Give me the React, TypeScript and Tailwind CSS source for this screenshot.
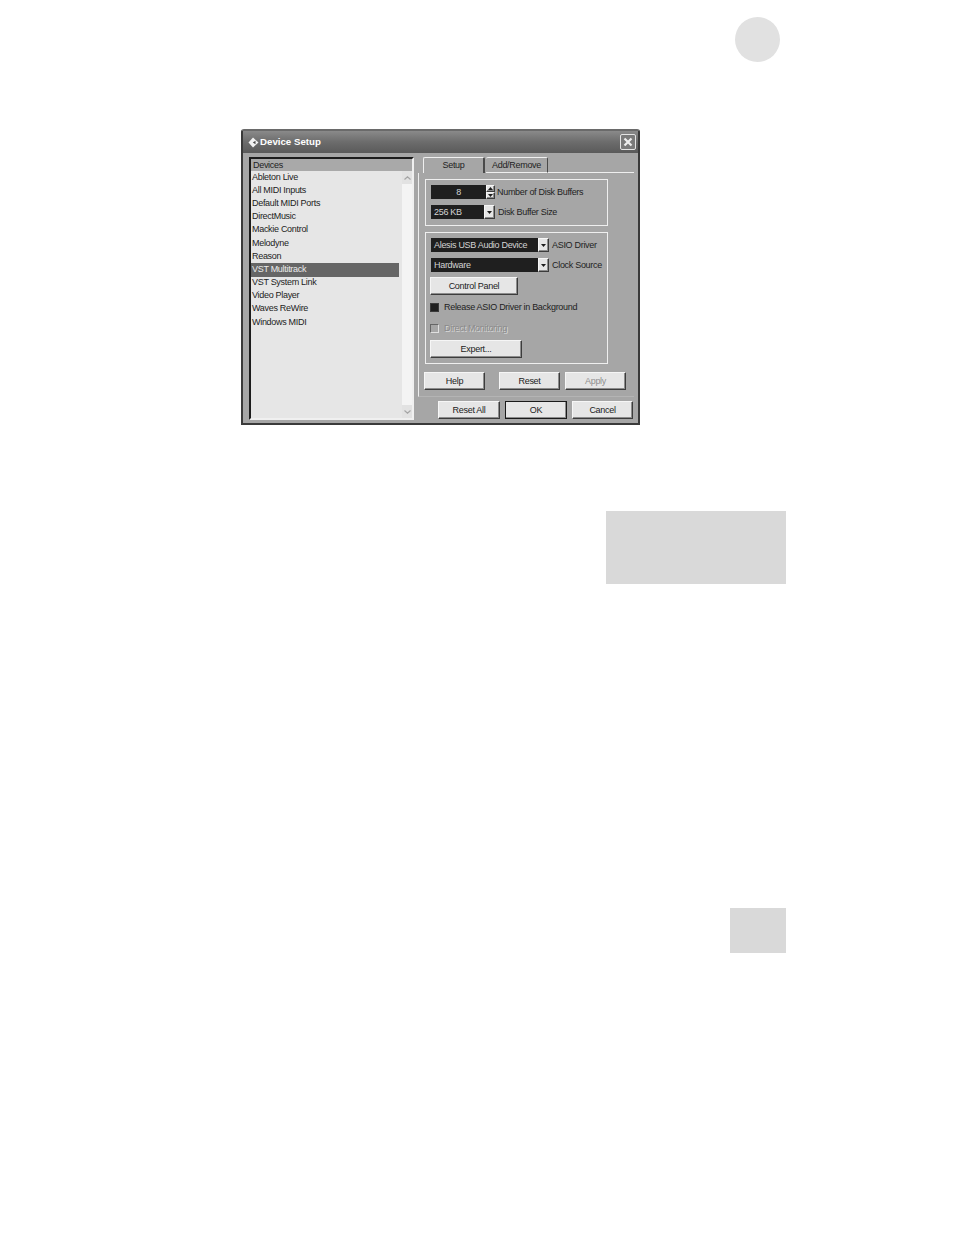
const devices = [
  'Ableton Live',
  'All MIDI Inputs',
  'Default MIDI Ports',
  'DirectMusic',
  'Mackie Control',
  'Melodyne',
  'Reason',
  'VST Multitrack',
  'VST System Link',
  'Video Player',
  'Waves ReWire',
  'Windows MIDI',
]

const raised =
  'flex items-center justify-center bg-[#e6e6e6] border border-[#f6f6f6] border-r-[#3c3c3c] border-b-[#3c3c3c] shadow-[inset_-1px_-1px_0_#8c8c8c] text-[#1c1c1c]'

function Btn({ label, w, disabled, strong }: { label: string; w: string; disabled?: boolean; strong?: boolean }) {
  return (
    <div
      className={`${raised} ${w} h-[18px] ${disabled ? 'text-[#8f8f8f]' : ''} ${strong ? 'outline outline-1 -outline-offset-1 outline-[#1a1a1a]' : ''}`}
    >
      {label}
    </div>
  )
}

function Arrow({ up }: { up?: boolean }) {
  return (
    <svg width="5" height="3" viewBox="0 0 5 3" className={up ? 'rotate-180' : ''}>
      <path d="M0 0h5L2.5 3z" fill="#1c1c1c" />
    </svg>
  )
}

function Combo({ label, w, side }: { label: string; w: string; side: string }) {
  return (
    <div className="flex items-center">
      <div className={`${w} flex h-[14px] items-center bg-[#1f1f1f] pl-[3px] text-[#d4d4d4]`}>
        <span className="flex-1 whitespace-nowrap">{label}</span>
        <span className={`${raised} h-[14px] w-[11px] shrink-0`}>
          <Arrow />
        </span>
      </div>
      <span className="ml-[3px] whitespace-nowrap text-[#222]">{side}</span>
    </div>
  )
}

function DeviceList() {
  return (
    <div className="flex h-[263px] w-[165px] flex-col border-2 border-[#1c1c1c] border-r-[#f0f0f0] border-b-[#f0f0f0] bg-[#e6e6e6]">
      <div className="flex h-[12px] items-center bg-[#a9a9a9] pl-[2px] text-[#222]">Devices</div>
      <div className="flex min-h-0 flex-1">
        <div className="mr-[3px] flex flex-1 flex-col">
          {devices.map((d) => (
            <div
              key={d}
              className={`flex h-[13.2px] items-center pb-[1px] pl-[1px] ${d === 'VST Multitrack' ? 'bg-[#666] text-[#ececec]' : 'text-[#1c1c1c]'}`}
            >
              {d}
            </div>
          ))}
        </div>
        <div className="flex w-[10px] flex-col justify-between bg-[#f4f4f4]">
          <div className="flex h-[13px] items-center justify-center bg-[#e2e2e2]">
            <svg width="7" height="4" viewBox="0 0 7 4">
              <path d="M0.5 3.5L3.5 .8 6.5 3.5" fill="none" stroke="#a5a5a5" strokeWidth="1.2" />
            </svg>
          </div>
          <div className="flex h-[13px] items-center justify-center bg-[#e2e2e2]">
            <svg width="7" height="4" viewBox="0 0 7 4">
              <path d="M0.5 .5L3.5 3.2 6.5 .5" fill="none" stroke="#a5a5a5" strokeWidth="1.2" />
            </svg>
          </div>
        </div>
      </div>
    </div>
  )
}

function SetupPane() {
  return (
    <div className="w-[216px]">
      <div className="flex h-[16px] pl-[5px]">
        <div className="flex w-[62px] items-center justify-center rounded-t-[2px] border-t border-l border-[#efefef] border-r-2 border-r-[#4a4a4a] pb-[1px] text-[#222]">
          Setup
        </div>
        <div className="ml-[1px] flex w-[62px] items-center justify-center rounded-t-[2px] border-t border-b border-[#efefef] border-r border-r-[#4a4a4a] text-[#222]">
          Add/Remove
        </div>
        <div className="flex-1 border-b border-[#efefef]" />
      </div>
      <div className="h-[224px] border-l border-b border-l-[#efefef] border-b-[#b4b4b4] pt-[6px] pl-[6px]">
        <div className="flex h-[47px] w-[183px] flex-col gap-[6px] border border-[#efefef] pt-[5px] pl-[5px]">
          <div className="flex items-center">
            <div className="flex h-[14px] w-[55px] items-center justify-center bg-[#1f1f1f] text-[#d4d4d4]">8</div>
            <div className="flex h-[14px] w-[9px] flex-col">
              <span className={`${raised} h-[7px]`}>
                <Arrow up />
              </span>
              <span className={`${raised} h-[7px]`}>
                <Arrow />
              </span>
            </div>
            <span className="ml-[2px] text-[#222]">Number of Disk Buffers</span>
          </div>
          <Combo label="256 KB" w="w-[64px]" side="Disk Buffer Size" />
        </div>
        <div className="mt-[6px] flex h-[132px] w-[183px] flex-col border border-[#efefef] pt-[5px] pl-[4px]">
          <div className="ml-[1px]">
            <Combo label="Alesis USB Audio Device" w="w-[118px]" side="ASIO Driver" />
          </div>
          <div className="mt-[6px] ml-[1px]">
            <Combo label="Hardware" w="w-[118px]" side="Clock Source" />
          </div>
          <div className={`${raised} mt-[5px] h-[18px] w-[88px]`}>Control Panel</div>
          <div className="mt-[8px] flex h-[9px] items-center">
            <span className="h-[9px] w-[9px] border border-[#3a3a3a] bg-[#1f1f1f]" />
            <span className="ml-[5px] text-[#222]">Release ASIO Driver in Background</span>
          </div>
          <div className="mt-[12px] flex h-[9px] items-center">
            <span className="h-[9px] w-[9px] border border-[#666] border-r-[#e0e0e0] border-b-[#e0e0e0]" />
            <span className="ml-[5px] text-[#8a8a8a] [text-shadow:1px_1px_0_#d8d8d8]">Direct Monitoring</span>
          </div>
          <div className={`${raised} mt-[7px] h-[18px] w-[92px]`}>Expert...</div>
        </div>
        <div className="mt-[8px] -ml-[1px] flex">
          <Btn label="Help" w="w-[61px]" />
          <div className="ml-[14px]">
            <Btn label="Reset" w="w-[61px]" />
          </div>
          <div className="ml-[5px]">
            <Btn label="Apply" w="w-[61px]" disabled />
          </div>
        </div>
      </div>
      <div className="mt-[4px] ml-[20px] flex gap-[5px]">
        <Btn label="Reset All" w="w-[62px]" />
        <Btn label="OK" w="w-[62px]" strong />
        <Btn label="Cancel" w="w-[61px]" />
      </div>
    </div>
  )
}

function DeviceSetup() {
  return (
    <div className="ml-[241px] h-[296px] w-[399px] rounded-t-[3px] border-2 border-[#3a3a3a] border-t-[#6a6a6a] bg-[#a6a6a6] text-[9px] leading-none tracking-[-0.3px] [font-family:'Liberation_Sans',Arial,sans-serif]">
      <div className="flex h-[22px] items-center bg-gradient-to-b from-[#8a8a8a] via-[#6c6c6c] to-[#5a5a5a] pr-[2px] pl-[5px]">
        <svg width="11" height="11" viewBox="0 0 11 11">
          <path d="M5 0.5L10.5 5.5 5 10.5 0.5 5.5z" fill="#f2f2f2" />
          <path d="M7.5 3.8L4.8 5.5 7.5 7.2z" fill="#4a4a4a" />
        </svg>
        <span className="ml-[1px] flex-1 pb-[1px] text-[9.7px] font-bold tracking-normal text-white">Device Setup</span>
        <span className="flex h-[16px] w-[16px] items-center justify-center rounded-[2px] border border-[#e4e4e4] bg-[#7a7a7a]">
          <svg width="10" height="10" viewBox="0 0 10 10">
            <path d="M1.5 1.5L8.5 8.5M8.5 1.5L1.5 8.5" stroke="#eee" strokeWidth="2.2" />
          </svg>
        </span>
      </div>
      <div className="flex gap-[4px] pt-[4px] pl-[6px]">
        <DeviceList />
        <SetupPane />
      </div>
    </div>
  )
}

export default function App() {
  return (
    <div className="flex h-[1235px] w-[954px] flex-col bg-white">
      <div className="mt-[17px] ml-[735px] h-[45px] w-[45px] rounded-full bg-[#e1e1e1]" />
      <div className="mt-[67px]">
        <DeviceSetup />
      </div>
      <div className="mt-[86px] ml-[606px] h-[73px] w-[180px] bg-[#d9d9d9]" />
      <div className="mt-[324px] ml-[730px] h-[45px] w-[56px] bg-[#d9d9d9]" />
    </div>
  )
}
